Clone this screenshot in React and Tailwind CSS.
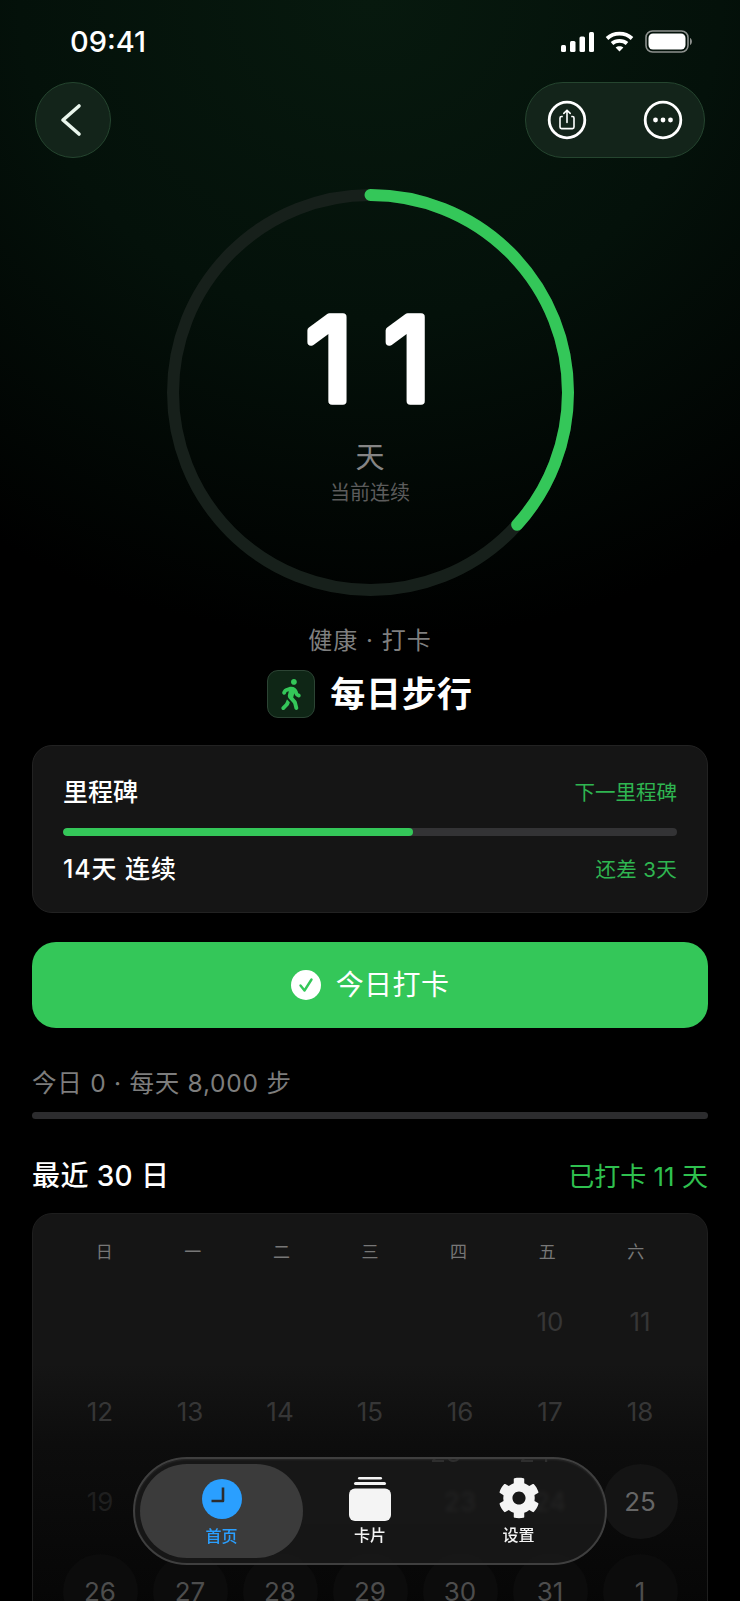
import React from 'react';
import { FaWalking, FaCog } from 'react-icons/fa';

const cjk = "font-['Inter','Noto_Sans_CJK_SC',sans-serif]";

const weekDays = ['日', '一', '二', '三', '四', '五', '六'];

// 30 day calendar, null = empty cell
const rows = [
    [null, null, null, null, null, { d: 10 }, { d: 11 }],
    [{ d: 12 }, { d: 13 }, { d: 14 }, { d: 15 }, { d: 16 }, { d: 17 }, { d: 18 }],
    [{ d: 19, faint: true }, { d: 20, faint: true }, { d: 21, faint: true }, { d: 22, faint: true }, { d: 23, under: true }, { d: 24, under: true }, { d: 25, lit: true }],
    [{ d: 26, on: true }, { d: 27, on: true }, { d: 28, on: true }, { d: 29, on: true }, { d: 30, on: true }, { d: 31, on: true }, { d: 1, on: true }],
];

const cellClass = (cell) => {
    if (cell.lit) return 'bg-[#141414] text-[#666666]';
    if (cell.on) return 'bg-[#0c0c0c] text-[#4d4d4d]';
    if (cell.under) return 'text-[#4a4a4a]';
    if (cell.faint) return 'text-[#1f1f1f]';
    return 'text-[#363636]';
};

const StatusIcons = () => (
    <div className="flex items-center gap-[11px]">
        <svg width="33" height="20" viewBox="0 0 33 20" fill="#fff">
            <rect x="0" y="13" width="5" height="7" rx="1.5" />
            <rect x="9" y="9" width="5.5" height="11" rx="1.5" />
            <rect x="18.5" y="4.5" width="5.5" height="15.5" rx="1.5" />
            <rect x="28" y="0" width="5" height="20" rx="1.5" />
        </svg>
        <svg width="29" height="21" viewBox="0 0 29 21" fill="none" stroke="#fff" strokeWidth="3.8">
            <path d="M2 7.5 C9 1 20 1 27 7.5" />
            <path d="M7 12.5 C11 9 18 9 22 12.5" />
            <path d="M14.5 20.5 L10.6 16.4 C12.6 14.8 16.4 14.8 18.4 16.4 Z" fill="#fff" stroke="none" />
        </svg>
        <svg width="47" height="23" viewBox="0 0 47 23" fill="none">
            <rect x="1" y="1" width="42" height="21" rx="6.5" stroke="#8d918e" strokeWidth="1.6" />
            <rect x="3.5" y="3.5" width="37" height="16" rx="4.5" fill="#fff" />
            <path d="M45 8 C46.4 8.6 46.9 10 46.9 11.5 C46.9 13 46.4 14.4 45 15 Z" fill="#8d918e" />
        </svg>
    </div>
);

const ShareIcon = () => (
    <svg width="40" height="40" viewBox="0 0 40 40" fill="none" stroke="#fff">
        <circle cx="20" cy="20" r="17.8" strokeWidth="2.8" />
        <path d="M15.8 16.5 H14.5 Q13 16.5 13 18 V27 Q13 28.6 14.5 28.6 H25.5 Q27 28.6 27 27 V18 Q27 16.5 25.5 16.5 H24.2" strokeWidth="1.6" />
        <path d="M20 22.5 V10.5 M16.8 13.4 L20 10.2 L23.2 13.4" strokeWidth="1.6" strokeLinecap="round" strokeLinejoin="round" />
    </svg>
);

const MoreIcon = () => (
    <svg width="40" height="40" viewBox="0 0 40 40" fill="none">
        <circle cx="20" cy="20" r="17.8" stroke="#fff" strokeWidth="2.8" />
        <circle cx="12.5" cy="20" r="2.4" fill="#fff" />
        <circle cx="20" cy="20" r="2.4" fill="#fff" />
        <circle cx="27.5" cy="20" r="2.4" fill="#fff" />
    </svg>
);

const Ring = () => {
    const r = 197.5;
    const c = 2 * Math.PI * r;
    return (
        <div className="relative w-[407px] h-[407px]">
            <svg width="407" height="407" viewBox="0 0 407 407" fill="none" className="-rotate-90">
                <circle cx="203.5" cy="203.5" r={r} stroke="#17201b" strokeWidth="12" />
                <circle
                    cx="203.5"
                    cy="203.5"
                    r={r}
                    stroke="#34c759"
                    strokeWidth="12"
                    strokeLinecap="round"
                    strokeDasharray={`${c * 0.3667} ${c}`}
                />
            </svg>
            <div className="absolute inset-0 flex flex-col items-center">
                <svg width="407" height="250" viewBox="0 0 407 250" className="overflow-visible">
                    <text
                        x="217"
                        y="212"
                        textAnchor="middle"
                        fill="#fff"
                        stroke="#fff"
                        strokeWidth="7.5"
                        strokeLinejoin="round"
                        fontFamily="Inter"
                        fontWeight="400"
                        fontSize="116"
                        letterSpacing="31"
                    >
                        11
                    </text>
                </svg>
                <div className="text-[29px] leading-[38px] text-[#858585]">天</div>
                <div className="mt-[2px] text-[20px] leading-[28px] text-[#5c5c5c]">当前连续</div>
            </div>
        </div>
    );
};

const NavBar = () => (
    <div className="absolute left-[133px] top-[1457px] w-[474px] h-[108px] rounded-[54px] border-2 border-[#3f3f3f] bg-[#1a1a1acc] backdrop-blur-[2px] p-[5px] flex items-stretch shadow-[inset_0_1px_2px_rgba(255,255,255,0.08)] overflow-hidden">
        {/* refracted digits along the glass edge */}
        <span aria-hidden="true" className="absolute left-[295px] top-[-21px] text-[26px] leading-[30px] text-[#2e2e2e]">23</span>
        <span aria-hidden="true" className="absolute left-[384px] top-[-21px] text-[26px] leading-[30px] text-[#2e2e2e]">24</span>
        <div className="relative w-[163px] shrink-0 rounded-[47px] bg-[#3b3b3b] flex flex-col items-center pt-[15px]">
            <svg width="40" height="40" viewBox="0 0 40 40">
                <circle cx="20" cy="20" r="20" fill="#2a9fff" />
                <path d="M21 8.5 V22 H9.5" fill="none" stroke="#2c2c2e" strokeWidth="2.6" strokeLinejoin="round" />
            </svg>
            <span className="mt-[6px] text-[16px] leading-[22px] font-medium text-[#2a9fff]">首页</span>
        </div>
        <div className="relative w-[134px] shrink-0 flex flex-col items-center pt-[13px]">
            <svg width="42" height="44" viewBox="0 0 42 44" fill="#f4f4f4">
                <rect x="9" y="0" width="24" height="2.6" rx="1.3" />
                <rect x="5" y="5" width="32" height="3" rx="1.5" />
                <rect x="0" y="11.5" width="42" height="32.5" rx="6" />
            </svg>
            <span className="mt-[3px] text-[16px] leading-[22px] font-medium text-[#f4f4f4]">卡片</span>
        </div>
        <div className="relative w-[163px] shrink-0 flex flex-col items-center pt-[13px]">
            <FaCog className="w-[42px] h-[42px] text-[#f4f4f4]" />
            <span className="mt-[5px] text-[16px] leading-[22px] font-medium text-[#f4f4f4]">设置</span>
        </div>
    </div>
);

export default function App() {
    return (
        <div className={`relative w-[740px] h-[1601px] overflow-hidden bg-black text-white ${cjk} bg-[radial-gradient(ellipse_700px_640px_at_50%_0%,#07190e_0%,#04110a_50%,#000000_100%)]`}>
            {/* Status bar */}
            <div className="h-[82px] pl-[70px] pr-[48px] pt-[22px] flex items-start justify-between">
                <span className="text-[29px] leading-[40px] font-medium">09:41</span>
                <div className="pt-[8px]"><StatusIcons /></div>
            </div>

            {/* Header buttons */}
            <div className="px-[35px] flex justify-between">
                <button className="w-[76px] h-[76px] rounded-full bg-[#13241a] border border-[#25452f] flex items-center justify-center">
                    <svg width="24" height="36" viewBox="0 0 24 36" fill="none" stroke="#e9f5ec" strokeWidth="3.6" strokeLinecap="round" strokeLinejoin="round" className="-ml-[4px]">
                        <path d="M20 4 L4 18 L20 32" />
                    </svg>
                </button>
                <div className="w-[180px] h-[76px] rounded-[38px] bg-[#13241a] border border-[#25452f] flex items-center justify-between px-[21px]">
                    <ShareIcon />
                    <MoreIcon />
                </div>
            </div>

            {/* Streak ring */}
            <div className="mt-[31px] flex justify-center">
                <Ring />
            </div>

            {/* Habit title */}
            <div className="mt-[28px] text-center text-[24px] leading-[34px] tracking-[1px] text-[#7f7f7f]">健康 · 打卡</div>
            <div className="mt-[12px] flex items-center justify-center gap-[15px]">
                <div className="w-[48px] h-[48px] rounded-[11px] bg-[#0f2616] border border-[#2c4434] flex items-center justify-center">
                    <FaWalking className="w-[28px] h-[31px] text-[#34c759]" />
                </div>
                <span className="text-[35px] leading-[48px] font-bold tracking-[0.6px]">每日步行</span>
            </div>

            {/* Milestone card */}
            <div className="mx-[32px] mt-[27px] h-[168px] rounded-[20px] bg-[#151515] border border-[#222222] pl-[30px] pr-[30px] pt-[30px]">
                <div className="flex items-center justify-between h-[34px]">
                    <span className="text-[25px] font-medium">里程碑</span>
                    <span className="text-[20.5px] text-[#2fb551]">下一里程碑</span>
                </div>
                <div className="mt-[18px] h-[8px] rounded-full bg-[#333335] overflow-hidden">
                    <div className="h-full w-[57%] bg-[#34c759] rounded-full" />
                </div>
                <div className="mt-[17px] flex items-center justify-between h-[34px]">
                    <span className="text-[25px] font-medium tracking-[0.9px]">14天 连续</span>
                    <span className="text-[20.5px] text-[#2fb551] tracking-[0.3px]">还差 3天</span>
                </div>
            </div>

            {/* Check in */}
            <button className="mx-[32px] mt-[29px] w-[676px] h-[86px] rounded-[24px] bg-[#34c759] flex items-center justify-center gap-[15px]">
                <svg width="30" height="30" viewBox="0 0 30 30">
                    <circle cx="15" cy="15" r="15" fill="#fff" />
                    <path d="M9.5 15.5 L13.5 20.5 L20.5 9.5" fill="none" stroke="#34c759" strokeWidth="2.4" strokeLinecap="round" strokeLinejoin="round" />
                </svg>
                <span className="text-[28px] leading-[40px] tracking-[0.4px]">今日打卡</span>
            </button>

            {/* Today */}
            <div className="mx-[32px] mt-[37px] text-[24.5px] leading-[36px] tracking-[0.75px] text-[#7d7d7d]">今日 0 · 每天 8,000 步</div>
            <div className="mx-[32px] mt-[11px] h-[7px] rounded-full bg-[#2c2c2e]" />

            {/* Calendar */}
            <div className="mx-[32px] mt-[37px] flex items-center justify-between h-[40px]">
                <span className="text-[28px] font-medium tracking-[0.4px]">最近 30 日</span>
                <span className="text-[26px] text-[#2fc04f]">已打卡 11 天</span>
            </div>
            <div className="mx-[32px] mt-[17px] w-[676px] h-[430px] rounded-[20px] border border-[#1e1e1e] pt-[25px] bg-[linear-gradient(#151515_150px,#0d0d0d_230px,#060606_400px)]">
                <div className="grid grid-cols-7 px-[27px]">
                    {weekDays.map((w) => (
                        <div key={w} className="text-center text-[17px] leading-[26px] text-[#777777]">{w}</div>
                    ))}
                </div>
                <div className="mt-[11px] px-[22px] grid grid-cols-7 auto-rows-[90px]">
                    {rows.flat().map((cell, i) => (
                        <div key={i} className="flex items-center justify-center">
                            {cell && (
                                <div className={`w-[75px] h-[75px] rounded-full flex items-center justify-center text-[26px] ${cellClass(cell)}`}>
                                    {cell.d}
                                </div>
                            )}
                        </div>
                    ))}
                </div>
            </div>

            <NavBar />
        </div>
    );
}
